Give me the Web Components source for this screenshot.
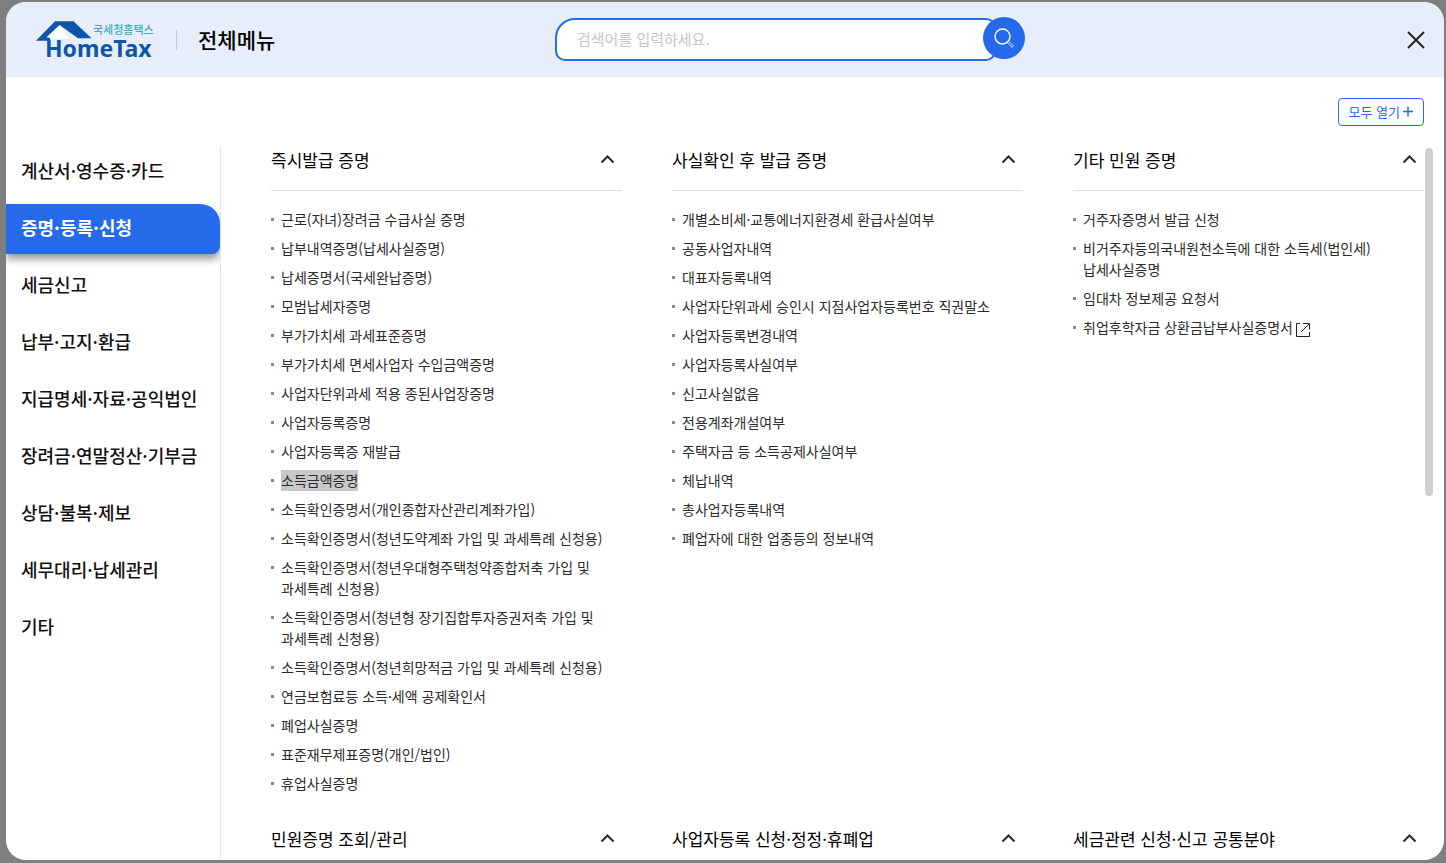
<!DOCTYPE html>
<html lang="ko">
<head>
<meta charset="utf-8">
<meta name="viewport" content="width=device-width, initial-scale=1">
<title>전체메뉴</title>
<style>
  html, body { margin: 0; height: 100%; }
  body { background: #7f7f7f; font-family: "Noto Sans CJK KR", "Noto Sans", sans-serif; color: #000; }
</style>
</head>
<body>
<site-menu></site-menu>

<script>
const define = (name, html, setup) => {
  const template = document.createElement('template');
  template.innerHTML = html;
  customElements.define(name, class extends HTMLElement {
    connectedCallback() {
      if (this.shadowRoot) return;
      this.attachShadow({ mode: 'open' }).append(template.content.cloneNode(true));
      if (setup) setup(this, this.shadowRoot);
    }
  });
};

define('home-logo', `
  <style>
    :host { display: block; }
    a { display: block; }
    svg { display: block; overflow: visible; }
  </style>
  <a href="#" aria-label="국세청홈택스 HomeTax">
    <svg width="120" height="48" viewBox="0 -4 120 48">
      <path fill="#fff" d="M23 4 9 18.500H33Z"/>
      <path fill="#0d55a8" d="M0 20.700 19 1.300H37.500L55.500 18.300H42L23.500 5 10.500 17.300 14 18V20.700Z"/>
      <text x="57" y="14" font-size="11" font-weight="500" fill="#3aadc6" font-family="Noto Sans CJK KR, sans-serif">국세청홈택스</text>
      <text x="9" y="37" font-size="23" font-weight="700" fill="#0d55a8" font-family="Noto Sans, sans-serif">HomeTax</text>
    </svg>
  </a>`);

define('search-box', `
  <style>
    :host { display: block; position: relative; height: 43px; }
    input { box-sizing: border-box; width: calc(100% - 29px); height: 43px; border: 2px solid #256aea;
      border-radius: 20px 10px 10px 10px; background: #fff; padding: 0 20px 2px; font: inherit; font-size: 15px; outline: 0; }
    input::placeholder { color: #c6c6c6; opacity: 1; }
    button { position: absolute; right: 0; top: -1px; width: 42px; height: 42px; border: 0; padding: 0;
      border-radius: 50%; background: #256aea; display: grid; place-items: center; }
  </style>
  <input type="search" aria-label="검색어" placeholder="검색어를 입력하세요.">
  <button aria-label="검색">
    <svg width="20" height="20" viewBox="0 0 20 20" fill="none" stroke="#fff">
      <circle cx="8.500" cy="8.500" r="7.500" stroke-width="1.400"/>
      <path d="M13.300 14.700 18 19.400M14.700 13.300 19.400 18M18 19.400 19.400 18" stroke-width=".8"/>
    </svg>
  </button>`);

define('menu-header', `
  <style>
    :host { display: grid; grid-template-columns: 549fr 470px 419fr; align-items: center; height: 75px; background: #e8eef9; }
    .brand { display: flex; align-items: center; padding-left: 30px; }
    .rule { width: 1px; height: 20px; background: #c8ccd2; margin: 0 21px 0 20px; }
    h1 { margin: 0; padding-bottom: 2px; font-size: 21px; line-height: 30px; font-weight: 500; }
    .close { justify-self: end; margin-right: 16px; width: 24px; height: 24px; border: 0; padding: 0; background: none; display: grid; place-items: center; }
  </style>
  <div class="brand"><home-logo></home-logo><span class="rule"></span><h1>전체메뉴</h1></div>
  <search-box></search-box>
  <button class="close" aria-label="닫기">
    <svg width="18" height="18" viewBox="0 0 18 18" stroke="#222" stroke-width="2"><path d="M1 1 17 17M17 1 1 17"/></svg>
  </button>`);

define('side-item', `
  <style>
    :host { display: block; }
    a { display: block; box-sizing: border-box; height: 50px; padding: 0 15px; line-height: 46px; font-size: 18px; font-weight: 500;
      color: #111; text-decoration: none; white-space: nowrap; }
    :host([active]) a { background: #256aea; color: #fff; font-weight: 700; border-radius: 0 20px 8px 0; box-shadow: 0 5px 8px rgba(0,0,0,.42); }
  </style>
  <a href="#"><slot></slot></a>`);

define('side-nav', `
  <style>
    :host { display: block; border-right: 1px solid #e4e2f8; width: 214px; flex: none; }
    nav { display: grid; gap: 7px; clip-path: inset(0 0 -20px 0); }
  </style>
  <nav aria-label="전체메뉴"><slot></slot></nav>`);

define('menu-link', `
  <style>
    :host { display: block; font-size: 14px; line-height: 21px; word-break: keep-all; }
    div { display: flex; gap: 7px; }
    i { flex: none; width: 3px; height: 3px; margin-top: 9px; background: #8a8a8a; }
    a { color: #2b2b2b; text-decoration: none; }
    :host([selected]) a { background: #c8c8c8; }
    svg { display: none; vertical-align: -4px; margin-left: 3px; }
    :host([external]) svg { display: inline-block; }
  </style>
  <div><i></i><a href="#"><slot></slot><svg width="14" height="14" viewBox="0 0 14 14" fill="none" stroke="#222"><path d="M4 .5H.5V13.500H13.500V9M5 9 13 1M7 .5H13.500V6.500"/></svg></a></div>`);

define('menu-section', `
  <style>
    :host { display: block; min-width: 0; }
    header { display: flex; justify-content: space-between; padding-bottom: 17px; border-bottom: 1px solid #dcdce6; }
    h2 { margin: 0; font-size: 17px; line-height: 26px; font-weight: 400; white-space: nowrap; }
    button { border: 0; padding: 0; background: none; width: 14px; height: 24px; margin-right: 8px; display: grid; place-items: center; }
    .list { display: grid; gap: 8px; padding-top: 18px; }
  </style>
  <header><h2></h2><button aria-expanded="true">
    <svg width="14" height="9" viewBox="0 0 14 9" fill="none" stroke="#2a2a2a" stroke-width="2"><path d="M1.500 7.500 7.500 1.500 13.500 7.500"/></svg>
  </button></header>
  <div class="list"><slot></slot></div>`,
  (host, root) => {
    root.querySelector('h2').textContent = host.getAttribute('heading');
    root.querySelector('button').setAttribute('aria-label', host.getAttribute('heading') + ' 접기');
  });

define('site-menu', `
  <style>
    :host { display: block; box-sizing: border-box; height: 100vh; padding: 2px 2px 3px 6px; }
    .panel { height: 100%; display: flex; flex-direction: column; background: #fff; border-radius: 20px; overflow: hidden; }
    menu-header { flex: none; }
    .tools { display: flex; justify-content: flex-end; padding: 21px 20px; }
    .tools button { display: flex; align-items: center; gap: 3px; height: 28px; padding: 0 10px 1px; border: 1px solid #256aea; border-radius: 4px;
      background: #fff; color: #256aea; font: inherit; font-size: 13px; line-height: 18px; white-space: nowrap; }
    .body { flex: 1; min-height: 0; display: flex; }
    .grid { flex: 1; min-width: 0; overflow: hidden; margin-left: 50px; display: grid; grid-template-columns: repeat(3, minmax(0, 1fr));
      align-content: start; gap: 32px 50px; }
    .thumb { flex: none; width: 8px; height: 348px; margin: 1px 11px 0 1px; border-radius: 4px; background: #d0d0d0; }
  </style>
  <div class="panel">
    <menu-header></menu-header>
    <div class="tools"><button>모두 열기<svg width="10" height="11" viewBox="0 0 10 11" stroke="#256aea" stroke-width="1.500"><path d="M5 .5V10.500M0 5.500H10"/></svg></button></div>
    <div class="body">
      <side-nav>
        <side-item>계산서·영수증·카드</side-item>
        <side-item active>증명·등록·신청</side-item>
        <side-item>세금신고</side-item>
        <side-item>납부·고지·환급</side-item>
        <side-item>지급명세·자료·공익법인</side-item>
        <side-item>장려금·연말정산·기부금</side-item>
        <side-item>상담·불복·제보</side-item>
        <side-item>세무대리·납세관리</side-item>
        <side-item>기타</side-item>
      </side-nav>
      <main class="grid">
        <menu-section heading="즉시발급 증명">
          <menu-link>근로(자녀)장려금 수급사실 증명</menu-link>
          <menu-link>납부내역증명(납세사실증명)</menu-link>
          <menu-link>납세증명서(국세완납증명)</menu-link>
          <menu-link>모범납세자증명</menu-link>
          <menu-link>부가가치세 과세표준증명</menu-link>
          <menu-link>부가가치세 면세사업자 수입금액증명</menu-link>
          <menu-link>사업자단위과세 적용 종된사업장증명</menu-link>
          <menu-link>사업자등록증명</menu-link>
          <menu-link>사업자등록증 재발급</menu-link>
          <menu-link selected>소득금액증명</menu-link>
          <menu-link>소득확인증명서(개인종합자산관리계좌가입)</menu-link>
          <menu-link>소득확인증명서(청년도약계좌 가입 및 과세특례 신청용)</menu-link>
          <menu-link>소득확인증명서(청년우대형주택청약종합저축 가입 및 과세특례 신청용)</menu-link>
          <menu-link>소득확인증명서(청년형 장기집합투자증권저축 가입 및 과세특례 신청용)</menu-link>
          <menu-link>소득확인증명서(청년희망적금 가입 및 과세특례 신청용)</menu-link>
          <menu-link>연금보험료등 소득·세액 공제확인서</menu-link>
          <menu-link>폐업사실증명</menu-link>
          <menu-link>표준재무제표증명(개인/법인)</menu-link>
          <menu-link>휴업사실증명</menu-link>
        </menu-section>
        <menu-section heading="사실확인 후 발급 증명">
          <menu-link>개별소비세·교통에너지환경세 환급사실여부</menu-link>
          <menu-link>공동사업자내역</menu-link>
          <menu-link>대표자등록내역</menu-link>
          <menu-link>사업자단위과세 승인시 지점사업자등록번호 직권말소</menu-link>
          <menu-link>사업자등록변경내역</menu-link>
          <menu-link>사업자등록사실여부</menu-link>
          <menu-link>신고사실없음</menu-link>
          <menu-link>전용계좌개설여부</menu-link>
          <menu-link>주택자금 등 소득공제사실여부</menu-link>
          <menu-link>체납내역</menu-link>
          <menu-link>총사업자등록내역</menu-link>
          <menu-link>폐업자에 대한 업종등의 정보내역</menu-link>
        </menu-section>
        <menu-section heading="기타 민원 증명">
          <menu-link>거주자증명서 발급 신청</menu-link>
          <menu-link>비거주자등의국내원천소득에 대한 소득세(법인세) 납세사실증명</menu-link>
          <menu-link>임대차 정보제공 요청서</menu-link>
          <menu-link external>취업후학자금 상환금납부사실증명서</menu-link>
        </menu-section>
        <menu-section heading="민원증명 조회/관리"></menu-section>
        <menu-section heading="사업자등록 신청·정정·휴폐업"></menu-section>
        <menu-section heading="세금관련 신청·신고 공통분야"></menu-section>
      </main>
      <div class="thumb"></div>
    </div>
  </div>`);
</script>
</body>
</html>
